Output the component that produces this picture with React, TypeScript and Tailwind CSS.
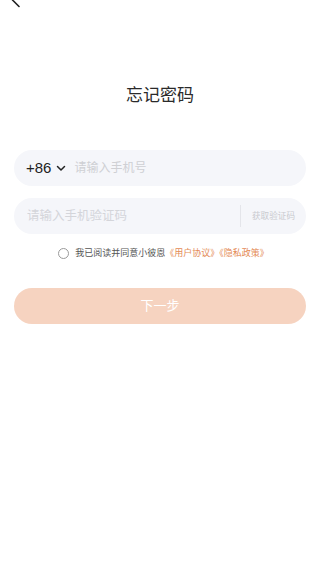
import React, { useState } from 'react';

const FONT = "font-['Liberation_Sans','Noto_Sans_CJK_SC',sans-serif]";

export default function App() {
  const [agreed, setAgreed] = useState(false);

  return (
    <div className={`relative w-full min-h-[568px] bg-white ${FONT}`}>
      {/* back arrow, mostly off the top edge */}
      <svg className="absolute left-0 top-0" width="24" height="10" viewBox="0 0 24 10" fill="none">
        <path d="M19 -6 L12.5 0 L19 6.5" stroke="#1f1f1f" strokeWidth="1.6" strokeLinecap="round" strokeLinejoin="round" />
      </svg>

      <h1 className="pt-[84px] text-center text-[17px] leading-6 text-[#2a2a2a]">忘记密码</h1>

      <div className="mx-[14px] mt-[42px] flex flex-col">
        {/* phone */}
        <div className="flex h-9 items-center rounded-full bg-[#f5f6fa] pl-3 pr-4">
          <span className="text-[15px] text-[#222]">+86</span>
          <svg className="ml-[5px]" width="10" height="7" viewBox="0 0 10 7" fill="none">
            <path d="M1.5 1.5 L5 5 L8.5 1.5" stroke="#222" strokeWidth="1.5" strokeLinecap="round" strokeLinejoin="round" />
          </svg>
          <input
            className="ml-2 min-w-0 flex-1 bg-transparent text-[12px] text-[#333] outline-none placeholder:text-[#cfd0d4]"
            placeholder="请输入手机号"
          />
        </div>

        {/* code */}
        <div className="mt-3 flex h-9 items-center rounded-full bg-[#f5f6fa] pl-[13px] pr-[11px]">
          <input
            className="min-w-0 flex-1 bg-transparent text-[12.5px] text-[#333] outline-none placeholder:text-[#d4d5da]"
            placeholder="请输入手机验证码"
          />
          <div className="h-[22px] w-px bg-[#e4e5ea]" />
          <button className="ml-[11px] text-[8.6px] text-[#c9cacf]">获取验证码</button>
        </div>

        {/* agreement */}
        <div className="mt-[13px] flex items-center justify-center pl-[7px]">
          <button
            onClick={() => setAgreed(!agreed)}
            className={`h-[11px] w-[11px] rounded-full border ${agreed ? 'border-[#eea47c] bg-[#eea47c]' : 'border-[#9a9a9a] bg-white'}`}
          />
          <p className="ml-[6px] text-[9px] leading-3 text-[#555]">
            我已阅读并同意小彼恩<span className="text-[#e48a55]">《用户协议》《隐私政策》</span>
          </p>
        </div>

        <button className="mt-[29px] h-9 rounded-full bg-[#f6d3c0] text-[13px] text-white">下一步</button>
      </div>
    </div>
  );
}
